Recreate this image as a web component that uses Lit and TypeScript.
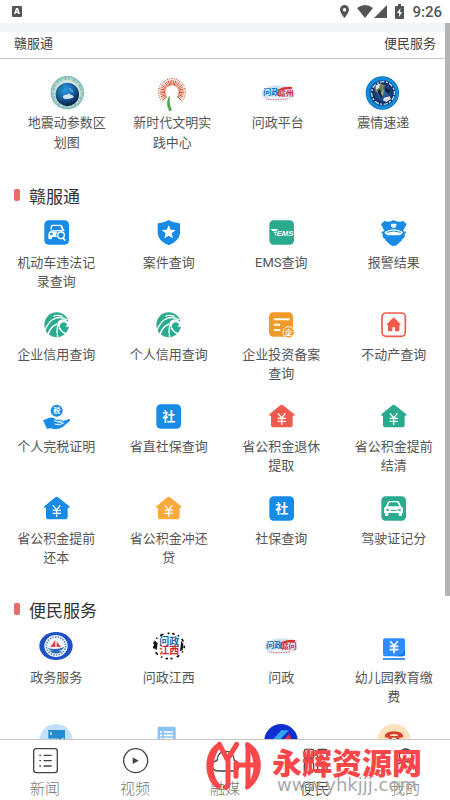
import { LitElement, html, svg, css, type TemplateResult } from "lit";
import { customElement, property, state } from "lit/decorators.js";
import { classMap } from "lit/directives/class-map.js";

const BLUE = "#178be6";
const GREEN = "#2aaa8e";
const RED = "#ef5a4c";
const ORANGE = "#f19a2c";

const glyph = (size: string, body: unknown) =>
  html`<svg viewBox=${size} aria-hidden="true">${body}</svg>`;

const tile = (fill: string, body: unknown) =>
  glyph("0 0 75 75", svg`<rect x="1" y="1" width="74" height="73" rx="13" fill=${fill}/>${body}`);

const house = (fill: string) =>
  glyph(
    "0 0 75 75",
    svg`<path fill=${fill} d="M34 4q4-3 8 0l34 27q3 4-2 4h-3v27q0 8-8 8H14q-8 0-8-8V35H3q-5 0-2-4z"/>
    <path fill="none" stroke="#fff" stroke-width="4" d="M27 28l11 14 11-14M26 43h25M26 52h25M38 42v21"/>`
  );

const swirl = () =>
  glyph(
    "0 0 75 75",
    svg`<circle cx="38" cy="38" r="37" fill=${GREEN}/>
    <path fill="#fff" d="M40 34q5-12 18-12 8 0 13 7l7-7v22H64q6-5 4-9-6-6-14-3-8 4-7 12 1 6 8 10-12-3-15-20z"/>
    <path fill="none" stroke="#fff" stroke-width="4" d="M3 56C9 37 19 24 34 19c13-5 25-2 36 5M28 13c9-4 18-4 28 0M12 69c4-16 14-29 28-33M41 40c-3 12-3 24 0 36M45 47c5 9 12 15 22 19"/>`
  );

const sheTile = () =>
  tile(BLUE, svg`<text x="38" y="52" class="mark" font-size="39">社</text>`);

const quake = () =>
  glyph(
    "0 0 102 102",
    svg`<defs>
      <radialGradient id="sea" cx=".4" cy=".3" r=".75"><stop offset="0" stop-color="#2f9be6"/><stop offset=".5" stop-color="#1763a8"/><stop offset="1" stop-color="#05152f"/></radialGradient>
      <radialGradient id="halo"><stop offset=".6" stop-color="#e4eee1"/><stop offset=".9" stop-color="#a9d0cc"/><stop offset="1" stop-color="#5cabba"/></radialGradient>
    </defs>
    <circle cx="52" cy="50" r="50" fill="url(#halo)"/>
    <circle cx="52" cy="50" r="42" fill="none" stroke="#86b79f" stroke-width="5" stroke-dasharray="4 9 7 5"/>
    <circle cx="52" cy="55" r="35" fill="url(#sea)"/>
    <path fill="#1f7f7a" opacity=".4" d="M24 39l11-12 12 1-6 10-10 6-5 12-6-4z"/>
    <path fill="#e1f1fc" opacity=".9" d="M38 62q4-8 12-5 6-8 12-1 8 0 9 8-12 8-29 4z"/>
    <path fill="#a8d7f3" opacity=".5" d="M55 35q11 2 17 16-8-6-11-5-2-6-6-11z"/>`
  );

const dandelion = () => {
  const rays = Array.from({ length: 29 }, (_, i) => {
    const a = ((-222 + i * 9.4) * Math.PI) / 180;
    const x = Math.cos(a);
    const y = Math.sin(a);
    return svg`<line x1=${51 + x * 20} y1=${48 + y * 20} x2=${51 + x * 42} y2=${48 + y * 42}
      stroke=${i % 2 ? "#dc6a46" : "#c93f20"} stroke-width="3" stroke-dasharray="16 2"/>`;
  });
  return glyph(
    "0 0 102 102",
    svg`${rays}<path fill="#4ca64b" d="M42 61q-12 22 1 45l8-3q-10-20-6-42z"/>`
  );
};

const wenzheng = (second: string) =>
  glyph(
    "0 0 102 84",
    svg`<ellipse cx="51" cy="44" rx="49" ry="25" fill="#cfe5f3"/>
    <ellipse cx="51" cy="60" rx="36" ry="8" fill="#eef5fa"/>
    <text x="31" y="49" class="mark" font-size="24" style="fill:#1874c4">问政</text>
    <text x="74" y="52" class="mark" font-size="24" style="fill:#dc2f36">${second}</text>
    <path fill="#dc2f36" d="M54 30q18-9 40-6l-2 6q-20-1-38 5z"/>
    <path fill="none" stroke="#d5555b" stroke-width="3" stroke-dasharray="3 2" d="M16 60q32 4 64-1"/>`
  );

const earthBlue = () =>
  glyph(
    "0 0 102 102",
    svg`<defs><radialGradient id="deep"><stop offset="0" stop-color="#3970b8"/><stop offset="1" stop-color="#0c2456"/></radialGradient></defs>
    <circle cx="49" cy="51" r="50" fill="#0869b8"/>
    <circle cx="49" cy="51" r="44" fill="none" stroke="#138fd9" stroke-width="8"/>
    <circle cx="51" cy="51" r="36" fill="url(#deep)"/>
    <circle cx="51" cy="51" r="34" fill="none" stroke="#c9dae6" stroke-width="4" stroke-dasharray="6 4 13 5"/>
    <path fill="#6d8157" d="M25 34l18-11 14 5-5 13-10 3-3 10-11-8z"/>
    <path fill="#d9e4e8" d="M29 28l15-6-5 13-9 7zM54 65l17-4 4 8-14 9-10-5z"/>
    <path fill="#14213b" d="M40 38l8 15 1 13-5-3-9-14zM59 34l15 9-8 10-9-8z"/>
    <path fill="#97a568" d="M47 44l8-5-5 22-6-9z"/>`
  );

const carSearch = () =>
  tile(
    BLUE,
    svg`<path fill="#fff" fill-rule="evenodd" d="M20 18q2-4 6-4h23q4 0 6 4l7 15-6 1H18l2-4h34l-4-10q-1-2-3-2H28q-2 0-3 2l-4 12h20q-6 8-3 19H24v4q0 3-3 3h-5q-3 0-3-3V44q0-8 6-12z"/>
    <circle cx="22" cy="42" r="4" fill=${BLUE}/>
    <circle cx="51" cy="46" r="10" fill="none" stroke="#fff" stroke-width="4"/>
    <path stroke="#fff" stroke-width="5" stroke-linecap="round" d="M57 54l5 6"/>`
  );

const shield = () =>
  glyph(
    "0 0 75 75",
    svg`<path fill=${BLUE} d="M38 0q14 9 32 10 2 0 2 2v28q-3 24-34 36Q7 64 5 40V12q0-2 2-2Q24 9 38 0z"/>
    <path fill="#fff" d="M38 15l6 14 15 1-12 10 4 15-13-8-13 8 4-15-12-10 15-1z"/>`
  );

const ems = () =>
  tile(
    GREEN,
    svg`<path fill="#fff" d="M4 27h22l-2 6H11zM12 35h12l-2 5h-5zM17 42h5l-2 6z"/>
    <text x="48" y="47" class="latin" font-size="23">EMS</text>`
  );

const police = () =>
  glyph(
    "0 0 75 75",
    svg`<path fill=${BLUE} d="M38 0q12 8 29 3l10 10-11 19q4 3 8 3l1 4-5 3 2 4q-1 8-8 11-2 6-7 9-10 12-19 12T19 66q-5-3-7-9-7-3-8-11l2-4-5-3 1-4q4 0 8-3L0 13 10 3q16 5 28-3z"/>
    <path fill="#fff" d="M30 11h16v7q-1 4-8 7-7-3-8-7zM10 36q28-16 56 0-3 8-10 10H20q-7-2-10-10z"/>
    <path fill="none" stroke=${BLUE} stroke-width="3" d="M17 37q21-8 42 0"/>`
  );

const investment = () =>
  glyph(
    "0 0 75 75",
    svg`<rect x="0" y="1" width="72" height="73" rx="13" fill=${ORANGE}/>
    <path stroke="#fff" stroke-width="6" stroke-linecap="round" d="M17 22h42M17 38h14M17 54h14"/>
    <circle cx="59" cy="61" r="17" fill=${ORANGE} stroke="#fff" stroke-width="3"/>
    <text x="59" y="69" class="mark" font-size="22">企</text>`
  );

const estate = () =>
  glyph(
    "0 0 75 75",
    svg`<rect x="3" y="3" width="70" height="70" rx="12" fill="#fff" stroke=${RED} stroke-width="5"/>
    <path fill=${RED} d="M38 16l21 21q1 3-3 3h-1v15q0 3-3 3H42V46h-8v12H24q-3 0-3-3V40h-1q-4 0-3-3z"/>`
  );

const tax = () =>
  glyph(
    "0 0 75 75",
    svg`<circle cx="38" cy="20" r="18" fill=${BLUE}/>
    <text x="38" y="28" class="mark" font-size="21">税</text>
    <path fill=${BLUE} d="M-3 49l12-5q16-8 27 3h17q6 2 1 6l-16 4q14 3 20-6l17-6q6 1 2 6L57 68q-12 9-30 6-9-3-18 1z"/>
    <path fill="none" stroke="#fff" stroke-width="3" d="M30 50q10 5 23 1M32 60q15 7 28-4"/>`
  );

const licence = () =>
  tile(
    GREEN,
    svg`<path fill="#fff" fill-rule="evenodd" d="M20 19q2-4 6-4h23q4 0 6 4l5 12q6 3 6 9v11h-3v6q0 3-3 3h-4q-3 0-3-3v-6H22v6q0 3-3 3h-4q-3 0-3-3v-6H9V40q0-6 6-9zm5 2l-5 10h35l-5-10q-1-2-3-2H28q-2 0-3 2z"/>
    <path fill=${GREEN} d="M16 39l8 1v4h-8zM59 39l-8 1v4h8zM29 42h18v3H29z"/>`
  );

const govService = () =>
  glyph(
    "0 0 102 84",
    svg`<ellipse cx="51" cy="42" rx="50" ry="42" fill="#1d4fc6"/>
    <ellipse cx="51" cy="42" rx="35" ry="33" fill="#f2f7fc"/>
    <ellipse cx="51" cy="42" rx="29" ry="27" fill="none" stroke="#5484cf" stroke-width="5" stroke-dasharray="4 4"/>
    <ellipse cx="51" cy="44" rx="23" ry="20" fill="#fff"/>
    <path fill="#d94240" d="M49 23v22H34zM53 28v17h13z"/>
    <path fill="#2467bb" d="M25 47q25 9 51-2-5 10-18 12 8 2 15-1-24 18-44-1 8 2 14 1-12-2-18-9z"/>`
  );

const jiangxi = () =>
  glyph(
    "0 0 102 84",
    svg`<ellipse cx="51" cy="42" rx="46" ry="38" fill="none" stroke="#111" stroke-width="5" stroke-dasharray="7 10 4 12 9 13 6 8"/>
    <path fill="#111" d="M8 25l9 9-3 20-10-7zM88 26l6 10-2 18-8 4zM24 8l12-3-9 9z"/>
    <path fill="#fff" d="M20 16h63v53H20z"/>
    <text x="52" y="38" class="mark" font-size="30" style="fill:#176ea7">问政</text>
    <text x="52" y="67" class="mark" font-size="30" style="fill:#d12b31">江西</text>`
  );

const tuition = () =>
  glyph(
    "0 0 102 84",
    svg`<rect x="18" y="19" width="66" height="54" rx="6" fill="#2e8cff"/>
    <path fill="#1678e8" d="M84 52v15q0 6-6 6H54q24-3 30-21z"/>
    <path fill="none" stroke="#fff" stroke-width="5" d="M40 28l11 13 11-13M38 43h26M38 53h26M51 42v22"/>
    <path stroke="#1d7deb" stroke-width="5" d="M18 81h66"/>`
  );

const screen = () =>
  glyph(
    "0 0 102 84",
    svg`<circle cx="51" cy="50" r="50" fill="#bfe1fb"/><rect x="28" y="18" width="50" height="44" fill="#258bd0"/>
    <path stroke="#fff" stroke-width="4" d="M36 24v9"/><path fill="none" stroke="#bfe1fb" stroke-width="3" d="M28 45h30l5 3 12-7"/>`
  );

const list = () =>
  glyph(
    "0 0 102 84",
    svg`<rect x="17" y="8" width="54" height="70" rx="4" fill="#8bc2f4"/>
    <path stroke="#fff" stroke-width="5" d="M24 24h6m5 0h28M24 34h6m5 0h28M24 44h6m5 0h28"/>`
  );

const bank = () =>
  glyph(
    "0 0 102 84",
    svg`<circle cx="51" cy="50" r="50" fill="#0f2fd0"/><path fill="#35a4ee" d="M14 60l38-41h22L36 60z"/><path fill="#e12e3c" d="M54 54l20-24 20 34z"/>`
  );

const phone = () =>
  glyph(
    "0 0 102 84",
    svg`<circle cx="51" cy="50" r="50" fill="#fae1bc"/>
    <path fill="#d33f2c" d="M23 40q0-18 28-18t28 18l-13 2-4-10q-11-4-22 0l-4 10zM39 36h24l12 26H27z"/>
    <circle cx="51" cy="48" r="8" fill="#fae1bc"/>`
  );

interface Service {
  name: string;
  icon: () => TemplateResult;
}

const featured: Service[] = [
  { name: "地震动参数区划图", icon: quake },
  { name: "新时代文明实践中心", icon: dandelion },
  { name: "问政平台", icon: () => wenzheng("赣州") },
  { name: "震情速递", icon: earthBlue },
];

const ganfutong: Service[] = [
  { name: "机动车违法记录查询", icon: carSearch },
  { name: "案件查询", icon: shield },
  { name: "EMS查询", icon: ems },
  { name: "报警结果", icon: police },
  { name: "企业信用查询", icon: swirl },
  { name: "个人信用查询", icon: swirl },
  { name: "企业投资备案查询", icon: investment },
  { name: "不动产查询", icon: estate },
  { name: "个人完税证明", icon: tax },
  { name: "省直社保查询", icon: sheTile },
  { name: "省公积金退休提取", icon: () => house(RED) },
  { name: "省公积金提前结清", icon: () => house(GREEN) },
  { name: "省公积金提前还本", icon: () => house(BLUE) },
  { name: "省公积金冲还贷", icon: () => house("#fda93c") },
  { name: "社保查询", icon: sheTile },
  { name: "驾驶证记分", icon: licence },
];

const convenience: Service[] = [
  { name: "政务服务", icon: govService },
  { name: "问政江西", icon: jiangxi },
  { name: "问政", icon: () => wenzheng("赣问") },
  { name: "幼儿园教育缴费", icon: tuition },
  { name: "", icon: screen },
  { name: "", icon: list },
  { name: "", icon: bank },
  { name: "", icon: phone },
];

@customElement("service-grid")
class ServiceGrid extends LitElement {
  @property({ attribute: false }) items: Service[] = [];
  @property() variant = "compact";

  static styles = css`
    :host { display: block; }
    .grid { display: grid; grid-template-columns: repeat(4, 1fr); }
    .item { display: flex; flex-direction: column; align-items: center; text-decoration: none; color: #555; }
    .name { width: 80px; text-align: center; font-size: 13px; font-weight: 400; }
    svg { display: block; overflow: visible; flex: none; }
    .mark { font-family: "Noto Sans CJK SC", sans-serif; font-weight: 700; fill: #fff; text-anchor: middle; }
    .latin { font-family: "Liberation Sans", sans-serif; font-weight: 700; font-style: italic; fill: #fff; text-anchor: middle; }
    .large { padding: 17px 14px 0; }
    .large svg { width: 34px; height: 34px; }
    .large .item { gap: 3px; }
    .large .name { line-height: 20px; }
    .compact { padding-top: 13px; row-gap: 21px; }
    .compact svg { width: 25px; height: 25px; }
    .compact .item { gap: 8px; min-height: 71px; }
    .compact .name { line-height: 19px; }
    .round { padding-top: 11px; row-gap: 18px; }
    .round svg { width: 34px; height: 28px; }
    .round .item { gap: 8px; min-height: 74px; }
    .round .name { line-height: 19px; }
  `;

  render() {
    return html`<div class="grid ${this.variant}">
      ${this.items.map(
        (s) => html`<a class="item" href="#">${s.icon()}<span class="name">${s.name}</span></a>`
      )}
    </div>`;
  }
}

const tabs = [
  {
    name: "新闻",
    icon: svg`<rect x="2" y="2" width="71" height="72" rx="8"/><path d="M19 22h5m8 0h24M19 38h5m8 0h24M19 54h5m8 0h24"/>`,
  },
  {
    name: "视频",
    icon: svg`<circle cx="38" cy="38" r="36"/><path class="solid" d="M29 28l18 10-18 10z"/>`,
  },
  {
    name: "融媒",
    icon: svg`<path d="M16 69Q-2 68-2 54q0-14 14-16Q14 10 38 10t26 28q14 2 14 16 0 14-18 15z"/>`,
  },
  {
    name: "便民",
    icon: svg`<rect x="4" y="4" width="28" height="28" rx="5"/><rect x="44" y="4" width="28" height="28" rx="5"/><rect x="4" y="44" width="28" height="28" rx="5"/><rect x="44" y="44" width="28" height="28" rx="5"/>`,
  },
  {
    name: "我的",
    icon: svg`<circle cx="38" cy="22" r="19"/><path d="M6 74q2-33 32-33t32 33"/>`,
  },
];

@customElement("app-root")
class AppRoot extends LitElement {
  @state() private current = "便民";

  static styles = css`
    :host {
      display: flex; flex-direction: column; position: relative; height: 100vh; overflow: hidden;
      background: #fff; color: #444;
      font-family: Roboto, "Noto Sans CJK SC", sans-serif; font-weight: 400;
    }
    .status { display: flex; align-items: center; justify-content: space-between; flex: none; height: 23px; padding: 0 8px 0 12px; }
    .status svg { display: block; height: 15px; }
    .signals { display: flex; align-items: center; gap: 8px; font-size: 15px; font-weight: 500; color: #555; }
    .radio { display: flex; gap: 1px; }
    .page { position: relative; display: flex; flex-direction: column; flex: 1; min-height: 0; }
    .top { display: flex; align-items: center; justify-content: space-between; flex: none; height: 20px; padding: 0 14px 6px; border-top: 9px solid #f0f4f8; border-bottom: 1px solid #c4c4c4; font-size: 13px; }
    .scroll { flex: 1; min-height: 0; overflow-y: auto; scrollbar-width: none; }
    .thumb { position: absolute; top: 0; right: 0; width: 5px; height: 80%; background: #b3b3b3; }
    h2 { display: flex; align-items: center; gap: 9px; height: 24px; margin: 30px 0 0; padding-left: 14px; font-size: 17px; font-weight: 400; color: #333; }
    h2::before { content: ""; width: 6px; height: 12px; border-radius: 2px; background: #ea6c66; }
    .tabs { display: flex; flex: none; border-top: 1px solid #c4c4c4; }
    .tab { display: flex; flex: 1; flex-direction: column; align-items: center; gap: 5px; height: 60px; padding: 8px 0 0; border: 0; background: none; color: #777; font-family: "Noto Sans CJK SC", serif; font-size: 15px; font-weight: 300; line-height: 20px; }
    .tab.on { color: #111; }
    .tab svg { width: 25px; height: 25px; flex: none; overflow: visible; fill: none; stroke: #444; stroke-width: 4; }
    .tab .solid { fill: #444; stroke: none; }
    .brand { position: absolute; right: 28px; bottom: 7px; display: flex; gap: 11px; pointer-events: none; color: #fa484a; }
    .brand svg { width: 55px; height: 50px; margin-top: -4px; }
    .site { display: flex; flex-direction: column; align-items: center; }
    .title { font-family: "Noto Sans CJK SC", sans-serif; font-size: 30px; font-weight: 900; line-height: 32px; }
    .url { font-family: "DejaVu Sans", sans-serif; font-size: 18px; font-weight: 400; line-height: 16px; color: #a9a9a9; }
  `;

  render() {
    return html`
      <div class="status">
        <svg viewBox="0 0 11 15" width="11" aria-hidden="true">
          <rect x="0" y="2" width="10" height="11" rx="1" fill="#555" />
          <path fill="#fff" fill-rule="evenodd" d="M4 4h2l2 6H6.500L6 9H4l-.5 1H2zM4.300 7.500h1.400L5 5.500z" />
        </svg>
        <div class="signals">
          <svg viewBox="0 0 9 15" width="9" aria-hidden="true">
            <path fill="#555" fill-rule="evenodd" d="M4.500 1a4.500 4.500 0 0 1 4.500 4.500C9 9 4.500 14 4.500 14S0 9 0 5.500A4.500 4.500 0 0 1 4.500 1zm0 3a1.700 1.700 0 1 0 0 3.400 1.700 1.700 0 0 0 0-3.400z" />
          </svg>
          <div class="radio">
            <svg viewBox="0 0 16 15" width="16" aria-hidden="true"><path fill="#555" d="M8 14L0 4q8-6 16 0z" /></svg>
            <svg viewBox="0 0 13 15" width="13" aria-hidden="true"><path fill="#555" d="M13 1v13H0z" /></svg>
          </div>
          <svg viewBox="0 0 9 15" width="9" aria-hidden="true">
            <path fill="#555" d="M3 0h3v2h2q1 0 1 1v11q0 1-1 1H1q-1 0-1-1V3q0-1 1-1h2z" />
            <path fill="#fff" d="M5.500 4L2 9h2v4l3-5H5z" />
          </svg>
          <span>9:26</span>
        </div>
      </div>
      <div class="page">
        <header class="top"><span>赣服通</span><span>便民服务</span></header>
        <main class="scroll">
          <service-grid variant="large" .items=${featured}></service-grid>
          <h2>赣服通</h2>
          <service-grid variant="compact" .items=${ganfutong}></service-grid>
          <h2>便民服务</h2>
          <service-grid variant="round" .items=${convenience}></service-grid>
        </main>
        <div class="thumb"></div>
      </div>
      <nav class="tabs">
        ${tabs.map(
          (t) => html`<button
            class=${classMap({ tab: true, on: t.name === this.current })}
            @click=${() => (this.current = t.name)}
          >
            <svg viewBox="0 0 75 75" aria-hidden="true">${t.icon}</svg>${t.name}
          </button>`
        )}
      </nav>
      <div class="brand">
        <svg viewBox="0 0 165 150" fill="none" stroke="currentColor" stroke-width="15" stroke-linecap="round" aria-hidden="true">
          <path fill="currentColor" stroke="none" d="M45 2C-12 20-14 122 42 147l4-13C14 108 16 48 46 16zM120 2c58 18 60 118 0 145l-3-12c34-24 34-92 0-120z" />
          <path d="M40 10l24 46L92 10M66 56v72q0 8-8 11M90 66v40M90 72h56M126 12v124" />
        </svg>
        <div class="site"><span class="title">永辉资源网</span><span class="url">www.yhkjjj.com</span></div>
      </div>
    `;
  }
}
